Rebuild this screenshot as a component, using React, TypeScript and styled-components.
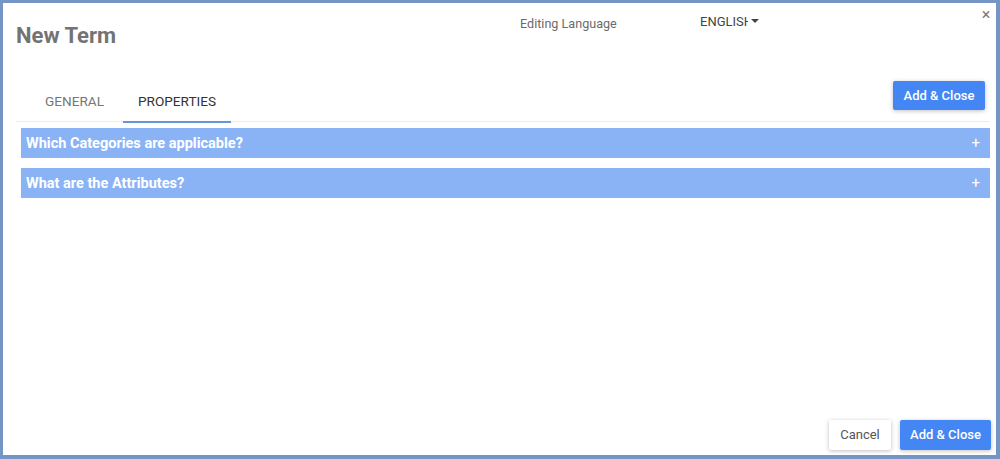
import React, { FC } from "react";
import styled, { createGlobalStyle } from "styled-components";

// Styles
const GlobalStyle = createGlobalStyle`
  html, body {
    margin: 0;
    padding: 0;
    background: #ffffff;
  }
  * {
    box-sizing: border-box;
  }
`;

const Frame = styled.div`
  position: relative;
  width: 1000px;
  height: 459px;
  display: flex;
  flex-direction: column;
  background: #ffffff;
  border-style: solid;
  border-color: #7595c5;
  border-width: 3px 4px 4px 3px;
  font-family: Roboto, "Liberation Sans", Arial, sans-serif;
`;

const CloseButton = styled.button`
  position: absolute;
  top: 4px;
  right: 3px;
  width: 14px;
  height: 16px;
  padding: 0;
  border: none;
  background: transparent;
  color: #7a7a7a;
  font-family: inherit;
  font-size: 16px;
  line-height: 16px;
  cursor: pointer;
`;

const TopBar = styled.div`
  display: grid;
  grid-template-columns: 504px 180px 1fr;
  padding: 13px 0 0 13px;
  height: 74px;
`;

const Title = styled.h1`
  margin: 7px 0 0;
  font-size: 22px;
  line-height: 26px;
  font-weight: 700;
  color: #737373;
`;

const LangLabel = styled.div`
  margin-top: 0;
  font-size: 12.6px;
  line-height: 16px;
  color: #6b6b6b;
`;

const LangSelect = styled.div`
  display: flex;
  align-items: center;
  gap: 3px;
  margin-top: -3px;
  height: 16px;
  font-size: 13px;
  color: #444;
`;

const LangText = styled.span`
  display: inline-block;
  width: 48px;
  overflow: hidden;
  white-space: nowrap;
`;

const Caret = styled.span`
  width: 0;
  height: 0;
  border-left: 4px solid transparent;
  border-right: 4px solid transparent;
  border-top: 4px solid #444;
`;

const TabRow = styled.div`
  display: flex;
  align-items: flex-end;
  justify-content: space-between;
  margin: 0 6px 0 13px;
  height: 45px;
  border-bottom: 1px solid #ececec;
`;

const Tabs = styled.div`
  display: flex;
  gap: 4px;
  padding-left: 14px;
`;

const Tab = styled.div<{ $active?: boolean }>`
  padding: 0 15px 12px;
  margin-bottom: -2px;
  font-size: 13.6px;
  line-height: 16px;
  color: ${(p) => (p.$active ? "#333333" : "#777777")};
  border-bottom: 2px solid ${(p) => (p.$active ? "#6a96d3" : "transparent")};
`;

const Button = styled.button<{ $primary?: boolean; $width: number }>`
  width: ${(p) => p.$width}px;
  height: 30px;
  padding: 0;
  border: none;
  border-radius: 2px;
  white-space: nowrap;
  font-family: inherit;
  font-size: 13px;
  line-height: 30px;
  font-weight: ${(p) => (p.$primary ? 500 : 400)};
  color: ${(p) => (p.$primary ? "#ffffff" : "#555555")};
  background: ${(p) => (p.$primary ? "#4386f4" : "#ffffff")};
  box-shadow: 0 1px 4px rgba(0, 0, 0, 0.25);
  cursor: pointer;
`;

const TopAction = styled(Button)`
  margin-bottom: 11px;
  margin-right: 5px;
  height: 29px;
  line-height: 29px;
`;

const Sections = styled.div`
  flex: 1;
  display: flex;
  flex-direction: column;
  gap: 10px;
  padding: 6px 6px 0 18px;
`;

const SectionHeader = styled.div`
  display: flex;
  align-items: center;
  justify-content: space-between;
  height: 30px;
  padding: 0 10px 0 5px;
  background: #8ab3f6;
  color: #ffffff;
  font-size: 14.5px;
  font-weight: 700;
`;

const Plus = styled.span`
  font-size: 15px;
  font-weight: 400;
  line-height: 1;
`;

const Footer = styled.div`
  display: flex;
  justify-content: flex-end;
  gap: 9px;
  padding: 0 5px 5px 0;
`;

// Components
const Section: FC<{ title: string }> = ({ title }) => (
  <SectionHeader>
    <span>{title}</span>
    <Plus>+</Plus>
  </SectionHeader>
);

const App: FC = () => (
  <>
    <GlobalStyle />
    <Frame>
      <CloseButton aria-label="Close">×</CloseButton>
      <TopBar>
        <Title>New Term</Title>
        <LangLabel>Editing Language</LangLabel>
        <LangSelect>
          <LangText>ENGLISH</LangText>
          <Caret />
        </LangSelect>
      </TopBar>
      <TabRow>
        <Tabs>
          <Tab>GENERAL</Tab>
          <Tab $active>PROPERTIES</Tab>
        </Tabs>
        <TopAction $primary $width={92}>
          Add &amp; Close
        </TopAction>
      </TabRow>
      <Sections>
        <Section title="Which Categories are applicable?" />
        <Section title="What are the Attributes?" />
      </Sections>
      <Footer>
        <Button $width={62}>Cancel</Button>
        <Button $primary $width={91}>
          Add &amp; Close
        </Button>
      </Footer>
    </Frame>
  </>
);

export default App;
